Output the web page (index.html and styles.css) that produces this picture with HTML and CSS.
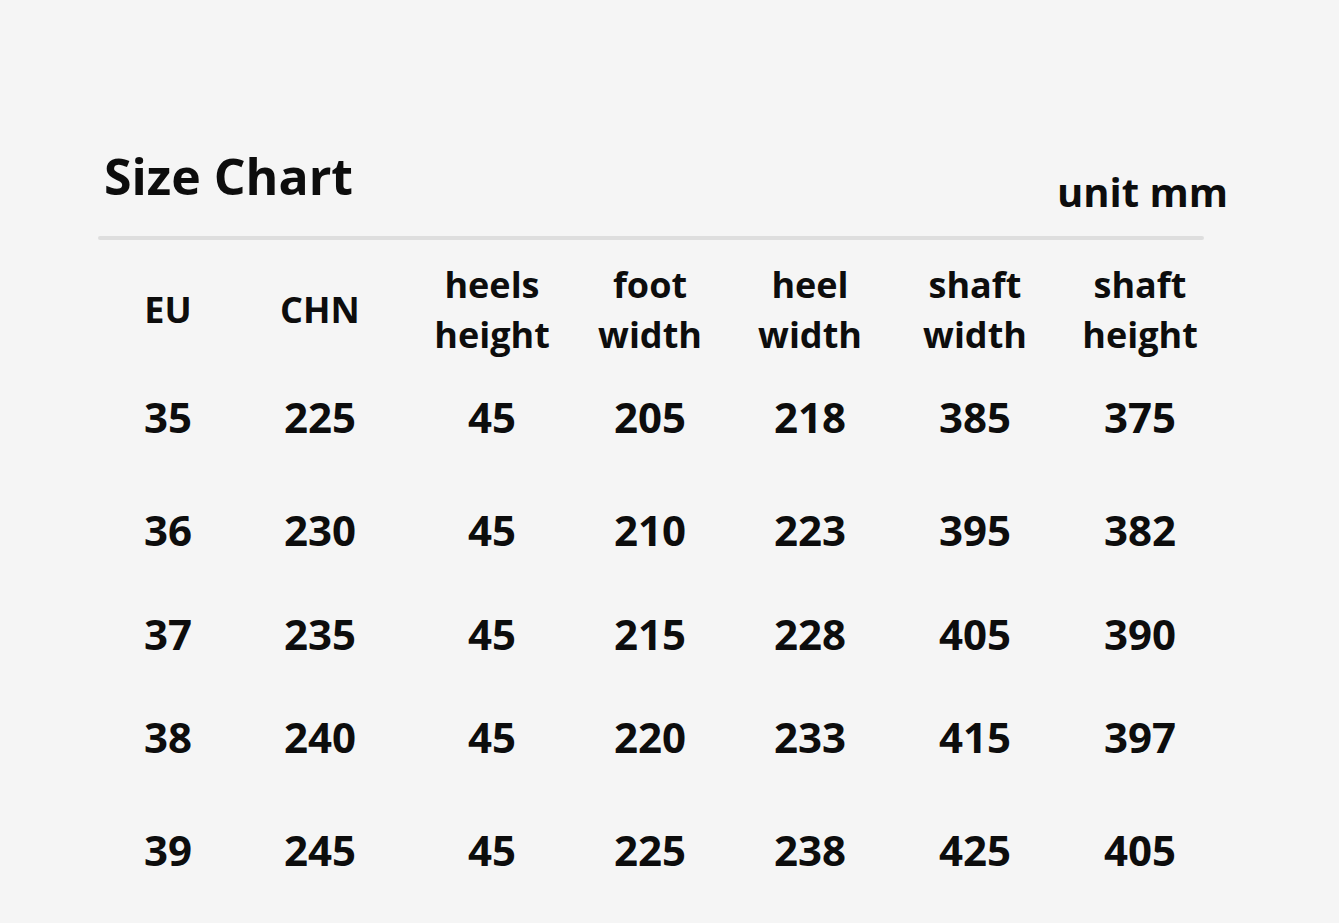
FILE: index.html
```html
<!DOCTYPE html>
<html>
<head>
<meta charset="utf-8">
<link rel="stylesheet" href="styles.css">
</head>
<body>
<div class="page">
  <div class="head">
    <h1 class="title">Size Chart</h1>
    <div class="unit">unit mm</div>
  </div>
  <div class="rule"></div>
  <div class="table">
    <div class="cell th">EU</div>
    <div class="cell th">CHN</div>
    <div class="cell th">heels<br>height</div>
    <div class="cell th">foot<br>width</div>
    <div class="cell th">heel<br>width</div>
    <div class="cell th">shaft<br>width</div>
    <div class="cell th">shaft<br>height</div>

    <div class="cell">35</div><div class="cell">225</div><div class="cell">45</div><div class="cell">205</div><div class="cell">218</div><div class="cell">385</div><div class="cell">375</div>
    <div class="cell">36</div><div class="cell">230</div><div class="cell">45</div><div class="cell">210</div><div class="cell">223</div><div class="cell">395</div><div class="cell">382</div>
    <div class="cell">37</div><div class="cell">235</div><div class="cell">45</div><div class="cell">215</div><div class="cell">228</div><div class="cell">405</div><div class="cell">390</div>
    <div class="cell">38</div><div class="cell">240</div><div class="cell">45</div><div class="cell">220</div><div class="cell">233</div><div class="cell">415</div><div class="cell">397</div>
    <div class="cell">39</div><div class="cell">245</div><div class="cell">45</div><div class="cell">225</div><div class="cell">238</div><div class="cell">425</div><div class="cell">405</div>
  </div>
</div>
</body>
</html>
```

FILE: styles.css
```css
html, body {
  margin: 0;
  padding: 0;
  background: #f5f5f5;
}
body {
  width: 1339px;
  height: 923px;
  overflow: hidden;
  font-family: "Open Sans", "Noto Sans", sans-serif;
  font-weight: 700;
  color: #0d0d0d;
}
.page {
  padding: 146px 0 0 98px;
  width: 1106px;
}
.head {
  display: flex;
  justify-content: space-between;
  align-items: flex-start;
  height: 90px;
}
.title {
  margin: 0 0 0 6px;
  font-size: 50px;
  line-height: 60px;
  font-weight: 700;
}
.unit {
  margin-top: 19px;
  margin-right: -24px;
  font-size: 40px;
  line-height: 54px;
}
.rule {
  height: 4px;
  background: #dedede;
  border-radius: 2px;
}
.table {
  display: grid;
  margin-left: -10px;
  grid-template-columns: 160px 144px 200px 116px 204px 126px 204px;
  grid-template-rows: 122px 110px 116px 92px 114px 112px;
}
.cell {
  display: flex;
  align-items: center;
  justify-content: center;
  text-align: center;
  font-size: 42px;
  line-height: 50px;
}
.th {
  font-size: 36px;
  padding-top: 18px;
}
```
